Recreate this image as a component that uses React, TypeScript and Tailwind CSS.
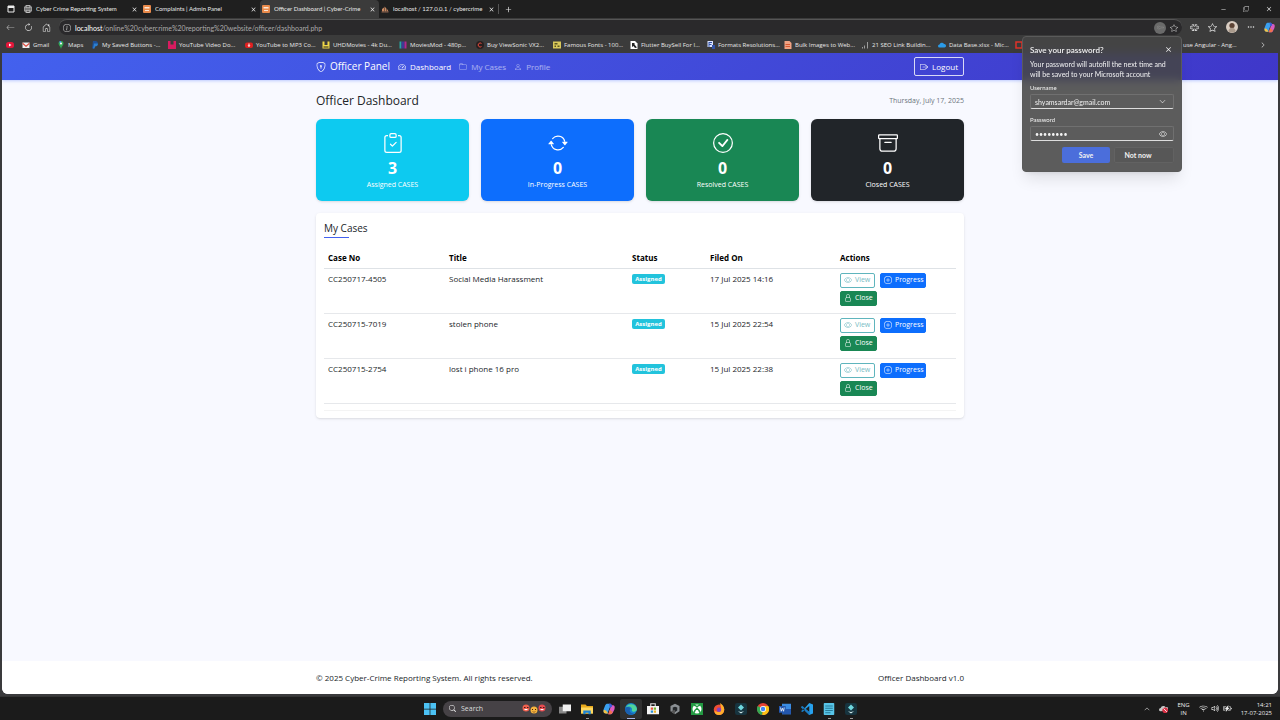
import React from "react";
import {
  BsShieldLock, BsSpeedometer2, BsFolder, BsPerson, BsBoxArrowRight, BsClipboardCheck,
  BsArrowRepeat, BsCheckCircle, BsArchive, BsEye, BsPlusCircle, BsLock, BsX, BsPlus, BsArrowLeft,
  BsArrowClockwise, BsHouseDoor, BsInfoCircle, BsStar, BsThreeDots, BsChevronRight, BsChevronDown,
  BsChevronUp, BsDash, BsSearch, BsWifi, BsVolumeUp, BsBatteryCharging, BsCopy, BsKey, BsPuzzle,
  BsGlobe,
} from "react-icons/bs";

type Kids = { children: React.ReactNode };

const Art = ({ children, className = "size-3" }: Kids & { className?: string }) => (
  <svg viewBox="0 0 16 16" className={"shrink-0 " + className} aria-hidden="true">{children}</svg>
);

const OrangeIcon = () => (
  <Art className="size-2">
    <rect width="16" height="16" rx="2" fill="#e98a4b" />
    <path d="M3 4h10v3H3zM4 10h8v2H4z" fill="#fbe7d6" />
  </Art>
);
const SailIcon = () => (
  <Art className="size-2">
    <path d="M2 13V8l4-3v8zM7 13V3l3 3v7zM11 13V6l4 7z" fill="#c98a62" />
    <path d="M1 13h14v2H1z" fill="#8d6550" />
  </Art>
);
const CopilotIcon = ({ className = "size-3" }: { className?: string }) => (
  <Art className={className}>
    <path d="M5 1h5l2 4-3 1-3 8H4C1 14 0 11 1 8l2-5Q4 1 5 1z" fill="#3aa0f0" />
    <path d="M1 9l3 1 3 4H4C1 14 0 12 1 9z" fill="#f5c242" />
    <path d="M11 3h2c3 0 3 3 2 6l-2 4c-1 2-2 2-3 2H7l2-6z" fill="#d95bc0" />
    <path d="M7 15l2-6 4 3c-1 2-2 3-3 3z" fill="#f0714e" />
    <path d="M8 1h2q2 0 2 4l-3 1z" fill="#3c5bdc" />
  </Art>
);

const tabs = [
  { title: "Cyber Crime Reporting System", icon: <BsGlobe className="size-2 shrink-0" /> },
  { title: "Complaints | Admin Panel", icon: <OrangeIcon /> },
  { title: "Officer Dashboard | Cyber-Crime", icon: <OrangeIcon />, active: true },
  { title: "localhost / 127.0.0.1 / cybercrime", icon: <SailIcon /> },
];

const bookmarks = [
  { label: "YouTube Video Do...", art: <><path fill="#d81b60" d="M0 0h16v16H0z" /><path fill="#3b3b3b" d="M5 0h6v7H5z" /></> },
  { label: "YouTube to MP3 Co...", art: <><rect y="3" width="16" height="11" rx="4" fill="#e02020" /><path fill="#fff" d="M7 5h2v4h2l-3 3-3-3h2z" /></> },
  { label: "UHDMovies - 4k Du...", art: <><path fill="#f0d848" d="M1 1h4v7h6V1h4v14H1z" /><path fill="#222" d="M3 11h10v2H3z" /></> },
  { label: "MoviesMod - 480p...", art: <><path fill="#28a6a0" d="M1 1h4v14H1z" /><path fill="#3d3a96" d="M5 1h6v14H5z" /><path fill="#b3258d" d="M11 1h4v14h-4z" /></> },
  { label: "Buy ViewSonic VX2...", art: <><circle cx="8" cy="8" r="8" fill="#281f1f" /><path d="M11 5a4 4 0 100 6" stroke="#e54a3c" strokeWidth="2" fill="none" /></> },
  { label: "Famous Fonts - 100...", art: <><path fill="#d9c85a" d="M0 1h16v14H0z" /><path fill="#5c5520" d="M3 4h6v3H3zM3 9h3v3H3zM9 9h4v3H9z" /></> },
  { label: "Flutter BuySell For I...", art: <><path fill="#fff" d="M1 0h9l5 5v11H1z" /><path fill="#222" d="M4 4h5v3l5 6-4 1-3-4-3 2z" /></> },
  { label: "Formats Resolutions...", art: <><path fill="#dbe4ff" d="M1 0h11v12H1z" /><path fill="#3352a5" d="M3 2h7v2H5v2h4v2H5v4H3zM10 8h6v8h-6z" /></> },
  { label: "Bulk Images to Web...", art: <><path fill="#f0a283" d="M1 0h10l4 4v12H1z" /><path fill="#d4572f" d="M3 6h9v2H3zM3 10h9v2H3z" /></> },
  { label: "21 SEO Link Buildin...", art: <path fill="#9c9c9c" d="M2 12h2v3H2zM6 9h2v6H6zM12 2h2v13h-2z" /> },
  { label: "Data Base.xlsx - Mic...", art: <path fill="#2a9be8" d="M3 13a3 3 0 010-6 5 5 0 019-1 3.500 3.500 0 011 7z" /> },
  { label: "", art: <path fill="none" stroke="#e0332a" strokeWidth="3" d="M2 2h12v12H2z" /> },
  { label: "", art: <circle cx="8" cy="8" r="6" fill="#666" /> },
];

const Bookmark = ({ label, children }: Kids & { label: string }) => (
  <a href="#" aria-label={label || "Bookmark"} className="flex w-[77px] shrink-0 items-center gap-[3px] whitespace-nowrap">
    <Art className="size-2">{children}</Art>{label}
  </a>
);

const BrowserChrome = () => (
  <header className="bg-[#3b3b3b] text-[6px] leading-[8px] text-[#e8e8e8]">
    <div className="flex h-[18px] items-stretch bg-[#1f1f1f]">
      <div className="flex w-[22px] items-center justify-center">
        <Art className="size-2"><path d="M2 2h12v12H2z" fill="none" stroke="#eee" strokeWidth="2" /><path d="M2 2h12v4H2z" fill="#eee" /></Art>
      </div>
      {tabs.map((t) => (
        <div key={t.title} className={"flex w-[119px] items-center gap-[4px] px-[2px] font-['Lato','Open_Sans',sans-serif] " + (t.active ? "rounded-t bg-[#3b3b3b]" : "")}>
          {t.icon}
          <span className="min-w-0 flex-1 overflow-hidden whitespace-nowrap">{t.title}</span>
          <button aria-label={"Close " + t.title}><BsX className="size-[9px]" /></button>
        </div>
      ))}
      <button aria-label="New tab" className="my-1 flex items-center border-l border-[#555] pl-1"><BsPlus className="size-[11px]" /></button>
      <div className="ml-auto flex items-center gap-[15px] pr-[6px]">
        <button aria-label="Minimize"><BsDash className="size-[9px]" /></button>
        <button aria-label="Restore"><BsCopy className="size-[6px]" /></button>
        <button aria-label="Close window"><BsX className="size-[10px]" /></button>
      </div>
    </div>
    <div className="flex h-[18px] items-center pr-[5px]">
      <div className="flex w-[59px] items-center gap-[9px] pl-[6px]">
        <button aria-label="Back"><BsArrowLeft className="size-[9px] text-[#aaa]" /></button>
        <button aria-label="Reload"><BsArrowClockwise className="size-[9px]" /></button>
        <button aria-label="Home"><BsHouseDoor className="size-[9px]" /></button>
      </div>
      <div className="flex h-4 min-w-0 flex-1 items-center rounded-full border-t border-[#555] bg-[#2a292b] px-1">
        <BsInfoCircle className="size-2 shrink-0 text-[#ccc]" />
        <div className="ml-[4px] flex-1 font-['Lato','Open_Sans',sans-serif] text-[7px] text-[#aaa]"><span className="text-white">localhost</span>/online%20cybercrime%20reporting%20website/officer/dashboard.php</div>
        <span className="mr-1 flex size-[12px] items-center justify-center rounded-full bg-[#6a6a6a]"><BsKey className="size-[7px] text-[#888]" /></span>
        <BsStar className="size-2 text-[#bbb]" />
      </div>
      <div className="flex items-center gap-[9px] pl-[8px]">
        <button aria-label="Extensions"><BsPuzzle className="size-[9px]" /></button>
        <button aria-label="Favorites"><BsStar className="size-[9px]" /></button>
        <button aria-label="Account">
          <Art className="size-[12px]"><circle cx="8" cy="8" r="8" fill="#d9cdc2" /><circle cx="8" cy="6" r="3.500" fill="#5c4335" /><path d="M3 14q1-5 5-5t5 5q-5 3-10 0z" fill="#a99a8c" /></Art>
        </button>
        <button aria-label="More"><BsThreeDots className="size-[8px]" /></button>
        <button aria-label="Copilot"><CopilotIcon className="size-[11px]" /></button>
      </div>
    </div>
    <nav aria-label="Bookmarks" className="flex h-[17px] items-center overflow-hidden pl-[6px]">
      <a href="#" aria-label="YouTube" className="w-4"><Art className="size-2"><rect y="2" width="16" height="12" rx="5" fill="#e5173a" /><path d="M6 5l5 3-5 3z" fill="#fff" /></Art></a>
      <a href="#" className="flex w-[35px] items-center gap-[3px]"><Art className="size-2"><path d="M1 3h14v11H1z" fill="#eee" /><path d="M1 3l7 6 7-6v3l-7 6-7-6z" fill="#dc4437" /></Art>Gmail</a>
      <a href="#" className="flex w-[34px] items-center gap-[3px]"><Art className="size-2"><path d="M8 0a5 5 0 015 5c0 4-4 6-5 11-1-5-5-7-5-11a5 5 0 015-5z" fill="#34a853" /><path d="M8 0a5 5 0 00-4 2l4 3z" fill="#4285f4" /><circle cx="8" cy="5" r="2" fill="#fff" /></Art>Maps</a>
      <Bookmark label="My Saved Buttons -..."><path d="M4 0h6q5 1 3 6-2 4-6 4l-1 5H2z" fill="#1f4f94" /><path d="M6 5h8q0 6-6 6l-1 4H4z" fill="#2b7fd0" /></Bookmark>
      {bookmarks.map((b, i) => <Bookmark key={i} label={b.label}>{b.art}</Bookmark>)}
      <a href="#" className="pl-[14px] whitespace-nowrap">use Angular - Ang...</a>
      <button aria-label="More bookmarks" className="mr-[14px] ml-auto"><BsChevronRight className="size-[6px]" /></button>
    </nav>
  </header>
);

const PasswordPrompt = () => (
  <form
    role="dialog"
    aria-label="Save your password?"
    className="absolute top-[36px] right-[98px] z-10 w-[160px] rounded border border-[#5a5a5a] bg-[#454545]/88 px-[7px] pt-[7px] pb-2 font-['Lato','Open_Sans',sans-serif] text-[7px] leading-[10px] text-[#f2f2f2] shadow-lg backdrop-blur-xs"
  >
    <div className="flex h-[11px] items-center justify-between">
      <h2 className="text-[8px] font-semibold">Save your password?</h2>
      <button type="button" aria-label="Dismiss"><BsX className="size-[11px]" /></button>
    </div>
    <p className="mt-1 whitespace-nowrap">Your password will autofill the next time and<br />will be saved to your Microsoft account</p>
    <label htmlFor="user" className="mt-[5px] block text-[6px] leading-[8px]">Username</label>
    <div className="mt-[2px] flex h-[15px] items-center rounded-xs border border-[#707070] border-b-[#ddd] px-1">
      <input id="user" type="text" defaultValue="shyamsardar@gmail.com" className="min-w-0 flex-1 bg-transparent outline-none" />
      <BsChevronDown className="mr-[3px] size-[7px]" />
    </div>
    <label htmlFor="pass" className="mt-[7px] block text-[6px] leading-[8px]">Password</label>
    <div className="mt-[2px] flex h-[15px] items-center rounded-xs border border-[#707070] border-b-[#ddd] px-1">
      <input id="pass" type="password" defaultValue="password" className="min-w-0 flex-1 bg-transparent outline-none" />
      <BsEye className="mr-[2px] size-2" />
    </div>
    <div className="mt-[6px] flex justify-end gap-1 font-bold">
      <button type="button" className="h-4 w-12 rounded-xs bg-[#4b6edb]">Save</button>
      <button type="button" className="h-4 w-[60px] rounded-xs border border-[#626262] bg-[#575757] pr-3">Not now</button>
    </div>
  </form>
);

const stats = [
  { label: "Assigned CASES", value: 3, color: "bg-[#0dcaf0]", Icon: BsClipboardCheck },
  { label: "In-Progress CASES", value: 0, color: "bg-[#0d6efd]", Icon: BsArrowRepeat },
  { label: "Resolved CASES", value: 0, color: "bg-[#198754]", Icon: BsCheckCircle },
  { label: "Closed CASES", value: 0, color: "bg-[#212529]", Icon: BsArchive },
];

const cases = [
  { no: "CC250717-4505", title: "Social Media Harassment", filed: "17 Jul 2025 14:16" },
  { no: "CC250715-7019", title: "stolen phone", filed: "15 Jul 2025 22:54" },
  { no: "CC250715-2754", title: "lost i phone 16 pro", filed: "15 Jul 2025 22:38" },
];

const action = "flex h-[15px] items-center gap-[3px] rounded-xs border px-[3px] text-[7px] leading-[10px]";

const Page = () => (
  <div className="mx-[2px] flex flex-1 flex-col overflow-hidden rounded-b-md bg-[#f8f9ff] text-[#212529]">
    <div className="bg-linear-135 from-[#4361ee] to-[#3f37c9] text-white shadow-sm shadow-indigo-200">
      <nav aria-label="Officer" className="mx-auto flex h-[27px] max-w-[648px] items-center text-[8px]">
        <a href="#" className="mr-2 flex items-center gap-[4px] text-[10px]"><BsShieldLock className="size-[10px]" />Officer Panel</a>
        <a href="#" className="mr-2 flex items-center gap-[4px]"><BsSpeedometer2 className="size-2" />Dashboard</a>
        <a href="#" className="mr-2 flex items-center gap-[4px] text-white/55"><BsFolder className="size-2" />My Cases</a>
        <a href="#" className="flex items-center gap-[4px] text-white/55"><BsPerson className="size-2" />Profile</a>
        <a href="#" className="ml-auto flex h-[19px] items-center gap-[4px] rounded-xs border border-white/80 px-[5px]"><BsBoxArrowRight className="size-2" />Logout</a>
      </nav>
    </div>
    <main className="mx-auto w-full max-w-[648px] flex-1 pt-[13px]">
      <div className="flex h-4 items-center justify-between">
        <h1 className="text-[12px] font-medium">Officer Dashboard</h1>
        <span className="text-[7px] text-[#6c757d]">Thursday, July 17, 2025</span>
      </div>
      <div className="mt-[10px] grid grid-cols-4 gap-3">
        {stats.map(({ label, value, color, Icon }) => (
          <div key={label} className={"flex h-[82px] flex-col items-center rounded-md pt-[14px] text-white shadow-sm " + color}>
            <Icon className="size-5" />
            <span className="mt-[5px] text-[16px] leading-[20px] font-bold">{value}</span>
            <span className="mt-[2px] text-[7px] leading-[10px]">{label}</span>
          </div>
        ))}
      </div>
      <section className="mt-3 rounded bg-white px-2 pt-2 pb-[7px] shadow-sm">
        <h2 className="text-[10px] leading-[15px] font-medium">My Cases</h2>
        <div className="mt-px h-px w-[25px] bg-[#4361ee]" />
        <table className="mt-[10px] w-full table-fixed border-b border-[#f4f4f4] text-left text-[8px] leading-[12px]">
          <colgroup><col className="w-[121px]" /><col className="w-[183px]" /><col className="w-[78px]" /><col className="w-[130px]" /><col /></colgroup>
          <thead>
            <tr className="h-5 border-b border-[#dee2e6] text-black">
              {["Case No", "Title", "Status", "Filed On", "Actions"].map((h) => <th key={h} className="px-1 font-bold">{h}</th>)}
            </tr>
          </thead>
          <tbody>
            {cases.map((c) => (
              <tr key={c.no} className="border-b border-[#e6e8eb] align-top">
                <td className="px-1 pt-1">{c.no}</td>
                <td className="px-1 pt-1">{c.title}</td>
                <td className="px-1 pt-[5px]"><span className="block w-[33px] rounded-xs bg-[#22c3dc] text-center text-[6px] leading-[10px] font-bold text-white">Assigned</span></td>
                <td className="px-1 pt-1">{c.filed}</td>
                <td className="px-1 pt-1">
                  <div className="flex flex-wrap gap-x-[5px] gap-y-[3px] pb-[7px]">
                    <button className={action + " w-[35px] border-[#5fb5bd] text-[#78bcc4]"}><BsEye className="size-2 shrink-0" />View</button>
                    <button className={action + " w-[46px] border-[#0d6efd] bg-[#0d6efd] text-white"}><BsPlusCircle className="size-2 shrink-0" />Progress</button>
                    <button className={action + " w-[37px] border-[#198754] bg-[#198754] text-white"}><BsLock className="size-2 shrink-0" />Close</button>
                  </div>
                </td>
              </tr>
            ))}
          </tbody>
          <tfoot><tr><td colSpan={5} className="h-[7px]" /></tr></tfoot>
        </table>
      </section>
    </main>
    <footer className="bg-white text-[8px]">
      <div className="mx-auto flex h-[33px] max-w-[648px] items-center justify-between">
        <span>© 2025 Cyber-Crime Reporting System. All rights reserved.</span>
        <span>Officer Dashboard v1.0</span>
      </div>
    </footer>
  </div>
);

const Filmora = () => <><rect width="16" height="16" rx="3" fill="#17343f" /><path d="M8 2l4 4-4 4-4-4z" fill="#6fd6de" /><path d="M4 11l4 3 4-3-4 1z" fill="#d3eef0" /></>;

const apps: { name: string; art: React.ReactNode; open?: boolean }[] = [
  { name: "Task view", art: <><path fill="#888" d="M0 5h10v9H0z" /><path fill="#f0f0f0" d="M5 2h11v9H5z" /></> },
  { name: "File Explorer", open: true, art: <><path fill="#e8a91c" d="M0 2h6l2 2h8v10H0z" /><path fill="#ffd75e" d="M0 6h16v8H0z" /><path fill="#1c83d4" d="M3 10h10v5h-3v-2H6v2H3z" /></> },
  { name: "Copilot", art: <CopilotIcon className="size-4" /> },
  { name: "Edge", open: true, art: <><circle cx="8" cy="8" r="8" fill="#1686d0" /><path d="M1 6a8 8 0 0115 2c0 4-6 5-7 2 2-4-4-7-8-4z" fill="#50d49a" /><path d="M0 8c2-5 8-2 7 0-2 2 0 6 5 6C6 18 0 14 0 8z" fill="#1a5fb0" /></> },
  { name: "Store", art: <><path fill="#f4f4f4" d="M0 4h16v11H0z" /><path d="M5 4V1h6v3" stroke="#ddd" strokeWidth="1.500" fill="none" /><path fill="#e5533d" d="M5 6h3v3H5z" /><path fill="#74b72e" d="M9 6h3v3H9z" /><path fill="#2a90d9" d="M5 10h3v3H5z" /><path fill="#edb526" d="M9 10h3v3H9z" /></> },
  { name: "Settings hub", art: <><path d="M8 1l6 3v7l-6 4-6-4V4z" fill="#8b9094" /><path d="M8 5l3 1v4l-3 2-3-2V6z" fill="#25282b" /><path d="M2 11l6-2v6z" fill="#555" /></> },
  { name: "Xbox", art: <><path fill="#239a42" d="M0 0h16v16H0z" /><circle cx="8" cy="8" r="6" fill="#fff" /><path d="M4 13q1-4 4-6 3 2 4 6M4 3q2 0 4 2 2-2 4-2" stroke="#239a42" strokeWidth="2" fill="none" /></> },
  { name: "Firefox", art: <><circle cx="8" cy="9" r="7" fill="#f04e33" /><path d="M9 0q6 3 6 9a7 7 0 01-7 7Q2 16 2 10q3 3 7 1t0-11z" fill="#ffad2c" /><circle cx="8" cy="9" r="3" fill="#8441c0" /></> },
  { name: "Filmora", art: <Filmora /> },
  { name: "Chrome", art: <><circle cx="8" cy="8" r="8" fill="#e64235" /><path d="M8 8L1 4a8 8 0 006 12z" fill="#34a853" /><path d="M8 8l-1 8A8 8 0 0015 4H8z" fill="#fbc116" /><circle cx="8" cy="8" r="4" fill="#fff" /><circle cx="8" cy="8" r="3" fill="#4285f4" /></> },
  { name: "Word", art: <><path fill="#3b8ce2" d="M4 1h12v14H4z" /><path fill="#2357ae" d="M4 8h12v7H4zM0 4h9v9H0z" /><path d="M2 6l1 5 1.500-4L6 11l1-5" stroke="#fff" fill="none" /></> },
  { name: "VS Code", art: <><path d="M11 0l5 2v12l-5 2-7-8z" fill="#27a1ed" /><path d="M11 4v8L6 8z" fill="#1c1c1c" /><path d="M0 5l2-1 10 9-1 3L0 6zM0 11l2 1 4-3-2-2z" fill="#1a7cc4" /></> },
  { name: "Notepad", open: true, art: <><rect x="1" width="14" height="16" rx="1" fill="#58c5e8" /><path d="M3 4h10M3 7h10M3 10h10M3 13h7" stroke="#17617e" /></> },
  { name: "Filmora project", open: true, art: <Filmora /> },
];

const Taskbar = () => (
  <footer className="relative mt-[2px] flex h-6 items-center justify-center border-t border-[#333] bg-[#1b1b1b] text-[6px] leading-[8px] text-[#eee]">
    <div className="flex items-center pl-[6px]">
      <button aria-label="Start" className="mr-[7px]"><Art><path d="M0 0h7.500v7.500H0zM8.500 0H16v7.500H8.500zM0 8.500h7.500V16H0zM8.500 8.500H16V16H8.500z" fill="#4cc2f5" /></Art></button>
      <label className="mr-[2px] flex h-4 w-[109px] items-center gap-[5px] rounded-full bg-[#464246] px-[6px]">
        <BsSearch className="size-[7px] shrink-0" />
        <input type="search" aria-label="Search" placeholder="Search" className="w-0 flex-1 bg-transparent text-[7px] outline-none placeholder:text-[#ddd]" />
        <svg viewBox="0 0 48 20" className="h-[10px] w-6" aria-hidden="true">
          <circle cx="8" cy="8" r="7" fill="#ef604e" /><circle cx="24" cy="12" r="7" fill="#f7b43c" /><circle cx="40" cy="8" r="7" fill="#e64b50" />
          <path d="M4 7h3M10 7h3M20 11h2M26 11h2M36 7h3M42 7h3" stroke="#401b1b" strokeWidth="2" />
          <path d="M4 10h8q-4 5-8 0zM36 10h8q-4 5-8 0z" fill="#fff" /><path d="M21 15q3 3 6 0" stroke="#401b1b" fill="none" />
        </svg>
      </label>
      {apps.map((a) => (
        <button key={a.name} aria-label={a.name} className={"relative flex h-5 w-[22px] items-center justify-center rounded-xs " + (a.name === "Edge" ? "bg-[#303030]" : "")}>
          <Art>{a.art}</Art>
          {a.open && <span className={"absolute bottom-0 h-px " + (a.name === "Edge" ? "w-2 bg-[#a9b8e8]" : "w-[3px] bg-[#999]")} />}
        </button>
      ))}
    </div>
    <div className="absolute inset-y-0 right-[8px] flex items-center">
      <BsChevronUp className="mr-[9px] size-[6px]" />
      <Art className="mr-[9px] size-[9px]"><path d="M3 13a3 3 0 010-6 5 5 0 019-1 3 3 0 013 6z" fill="#c9c9c9" /><circle cx="11" cy="11" r="5" fill="#d63145" /><path d="M8 8l6 6" stroke="#fff" strokeWidth="1.500" /></Art>
      <span className="mr-[9px] text-center">ENG<br />IN</span>
      <BsWifi className="mr-[3px] size-[9px]" /><BsVolumeUp className="mr-[3px] size-[9px]" /><BsBatteryCharging className="mr-[9px] size-[9px]" />
      <span className="text-right">14:21<br />17-07-2025</span>
    </div>
  </footer>
);

export default function App() {
  return (
    <div className="relative flex min-h-screen flex-col bg-[#3a3a3c] font-['Open_Sans','Noto_Sans',sans-serif]">
      <BrowserChrome />
      <PasswordPrompt />
      <Page />
      <Taskbar />
    </div>
  );
}
